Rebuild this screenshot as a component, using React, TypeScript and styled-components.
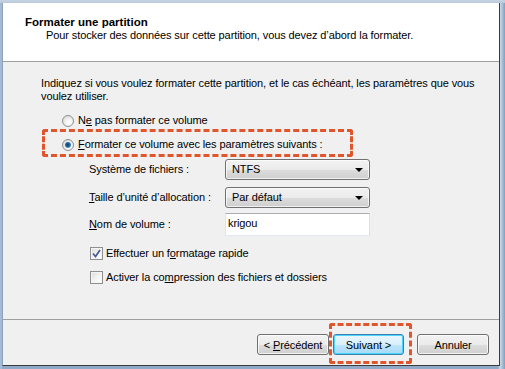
import React from 'react';
import styled, { createGlobalStyle } from 'styled-components';

const GlobalStyle = createGlobalStyle`
    html, body {
        margin: 0;
        padding: 0;
        background: #7c9cc2;
    }
    body {
        font-family: "Liberation Sans", Arial, sans-serif;
        font-size: 11px;
        letter-spacing: -0.1px;
        color: #000;
    }
`;

const Frame = styled.div`
    width: 505px;
    height: 369px;
    box-sizing: border-box;
    padding: 3px 5px 3px 2px;
    display: flex;
    background:
        linear-gradient(180deg, #c6d4e2 0, #b8cadd 3px, transparent 3px),
        linear-gradient(90deg, #a3bbd4 0, #a3bbd4 2px, transparent 2px),
        linear-gradient(90deg, #8fa9c8 0, #8fa9c8 498px, #cfdbe7 500px, #7e9ec4 505px);
`;

const Dialog = styled.div`
    flex: 1;
    display: flex;
    flex-direction: column;
    background: #f0f0f0;
    border-left: 1px solid #8ea1b6;
    border-right: 1px solid #3a3a3a;
    border-bottom: 1px solid #3a3a3a;
`;

const Header = styled.header`
    height: 59px;
    box-sizing: border-box;
    padding: 12.5px 0 0 22px;
    background: #fff;
    border-bottom: 1px solid #a0a0a0;
`;

const Title = styled.div`
    font-weight: bold;
    font-size: 11.5px;
    line-height: 13px;
    letter-spacing: 0;
`;

const Subtitle = styled.div`
    margin-left: 21px;
    line-height: 13px;
`;

const Body = styled.main`
    flex: 1;
    padding: 15px 0 0 38px;
`;

const Intro = styled.p`
    margin: 0;
    width: 450px;
    line-height: 13px;
`;

const OptionRow = styled.label<{ $top: number; $indent: number; $marked?: boolean }>`
    position: relative;
    display: flex;
    align-items: center;
    height: 13px;
    margin-top: ${p => p.$top}px;
    margin-left: ${p => p.$indent}px;
    line-height: 13px;
    gap: 4px;

    ${p => p.$marked && `
        &::after {
            content: '';
            position: absolute;
            left: -20px;
            top: -9px;
            width: 311px;
            height: 28px;
            box-sizing: border-box;
            border: 3px dashed #e0552b;
            border-radius: 3px;
        }
    `}
`;

const Radio = styled.span<{ $on?: boolean }>`
    position: relative;
    width: 12px;
    height: 12px;
    box-sizing: border-box;
    border-radius: 50%;
    border: 1px solid #8e8f8f;
    background: radial-gradient(circle at 60% 65%, #ffffff 0, #f4f4f4 35%, #d2d2d2 100%);

    ${p => p.$on && `
        &::after {
            content: '';
            position: absolute;
            left: 2px;
            top: 2px;
            width: 6px;
            height: 6px;
            border-radius: 50%;
            background: radial-gradient(circle at 45% 45%, #0f3a6b 0, #2a6fa6 50%, #86d2f2 100%);
        }
    `}
`;

const CheckBox = styled.span`
    display: flex;
    align-items: center;
    justify-content: center;
    width: 13px;
    height: 13px;
    box-sizing: border-box;
    border: 1px solid #8e8f8f;
    background: linear-gradient(135deg, #dcdcdc 0, #f6f6f6 60%, #ffffff 100%);
    box-shadow: inset 0 0 0 1px #f4f4f4;
    margin-right: -1px;
`;

const Fields = styled.div`
    margin: 8px 0 0 48px;
`;

const FieldRow = styled.div<{ $top: number }>`
    display: grid;
    grid-template-columns: 136px 145px;
    align-items: center;
    margin-top: ${p => p.$top}px;
    line-height: 13px;
`;

const Select = styled.div`
    height: 21px;
    box-sizing: border-box;
    display: flex;
    align-items: center;
    justify-content: space-between;
    padding: 0 6px 0 6px;
    border: 1px solid #707070;
    border-radius: 3px;
    background: linear-gradient(180deg, #f2f2f2 0, #ebebeb 50%, #dddddd 51%, #cfcfcf 100%);
    box-shadow: inset 0 0 0 1px rgba(255, 255, 255, 0.7);
`;

const Arrow = styled.span`
    width: 0;
    height: 0;
    border-left: 4px solid transparent;
    border-right: 4px solid transparent;
    border-top: 4px solid #000;
    margin-top: 1px;
`;

const TextBox = styled.div`
    height: 23px;
    box-sizing: border-box;
    padding: 3px 0 0 2px;
    background: #fff;
    border: 1px solid #abadb3;
    border-left-color: #e2e3ea;
    border-right-color: #dbdfe6;
    border-bottom-color: #e3e9ef;
`;

const Key = styled.u`
    text-decoration-thickness: 1px;
    text-underline-offset: 1px;
`;

const Footer = styled.footer`
    height: 46px;
    box-sizing: border-box;
    border-top: 1px solid #a0a0a0;
    display: flex;
    justify-content: flex-end;
    align-items: flex-start;
    padding: 14px 10px 0 0;
`;

const Button = styled.button<{ $primary?: boolean; $gap?: number; $width?: number }>`
    width: ${p => p.$width ?? 72}px;
    height: 21px;
    margin-left: ${p => p.$gap ?? 0}px;
    padding: 0;
    font: inherit;
    letter-spacing: inherit;
    color: #000;
    border-radius: 3px;
    border: 1px solid ${p => (p.$primary ? '#3c7fb1' : '#707070')};
    background: ${p =>
        p.$primary
            ? 'linear-gradient(180deg, #eaf6fd 0, #d9f0fc 50%, #bee6fd 51%, #a7d9f5 100%)'
            : 'linear-gradient(180deg, #f2f2f2 0, #ebebeb 50%, #dddddd 51%, #cfcfcf 100%)'};
    box-shadow: inset 0 0 0 1px ${p => (p.$primary ? '#48d4fc' : 'rgba(255,255,255,0.75)')};
`;

const Marked = styled.div`
    position: relative;
    margin-left: 4px;

    &::after {
        content: '';
        position: absolute;
        left: -4px;
        top: -11px;
        width: 83px;
        height: 41px;
        box-sizing: border-box;
        border: 3px dashed #e0552b;
        border-radius: 3px;
        pointer-events: none;
    }
`;

const Check = () => (
    <svg width="9" height="9" viewBox="0 0 9 9">
        <path d="M1 4.5 L3.5 7.5 L8 1" fill="none" stroke="#4a5f97" strokeWidth="1.8" />
    </svg>
);

export default function App() {
    return (
        <>
            <GlobalStyle />
            <Frame>
                <Dialog>
                    <Header>
                        <Title>Formater une partition</Title>
                        <Subtitle>Pour stocker des données sur cette partition, vous devez d’abord la formater.</Subtitle>
                    </Header>

                    <Body>
                        <Intro>
                            Indiquez si vous voulez formater cette partition, et le cas échéant, les paramètres que vous voulez utiliser.
                        </Intro>

                        <OptionRow $top={11} $indent={21}>
                            <Radio />
                            <span>N<Key>e</Key> pas formater ce volume</span>
                        </OptionRow>
                        <OptionRow $top={11} $indent={21} $marked>
                            <Radio $on />
                            <span><Key>F</Key>ormater ce volume avec les paramètres suivants :</span>
                        </OptionRow>

                        <Fields>
                            <FieldRow $top={0}>
                                <span>Système de fichiers :</span>
                                <Select>NTFS<Arrow /></Select>
                            </FieldRow>
                            <FieldRow $top={7}>
                                <span><Key>T</Key>aille d’unité d’allocation :</span>
                                <Select>Par défaut<Arrow /></Select>
                            </FieldRow>
                            <FieldRow $top={5}>
                                <span><Key>N</Key>om de volume :</span>
                                <TextBox>krigou</TextBox>
                            </FieldRow>

                            <OptionRow $top={11} $indent={1}>
                                <CheckBox><Check /></CheckBox>
                                <span>Effectuer un f<Key>o</Key>rmatage rapide</span>
                            </OptionRow>
                            <OptionRow $top={11} $indent={1}>
                                <CheckBox />
                                <span>Activer la co<Key>m</Key>pression des fichiers et dossiers</span>
                            </OptionRow>
                        </Fields>
                    </Body>

                    <Footer>
                        <Button>&lt; <Key>P</Key>récédent</Button>
                        <Marked>
                            <Button $primary $width={71}>Suivant &gt;</Button>
                        </Marked>
                        <Button $gap={13}>Annuler</Button>
                    </Footer>
                </Dialog>
            </Frame>
        </>
    );
}
